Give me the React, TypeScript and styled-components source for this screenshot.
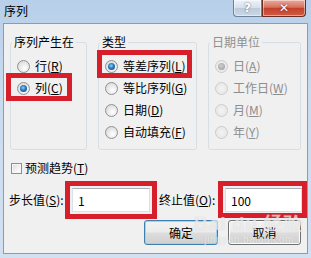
import styled, { createGlobalStyle } from 'styled-components';
import { ReactNode } from 'react';

const GlobalStyle = createGlobalStyle`
  html, body {
    margin: 0;
    padding: 0;
    background: #ffffff;
  }
  body {
    font-family: "Noto Sans CJK SC", "Microsoft YaHei", "DejaVu Sans", sans-serif;
    font-size: 12px;
    color: #000000;
  }
  * {
    box-sizing: border-box;
  }
`;

const Window = styled.div`
  position: relative;
  width: 311px;
  height: 258px;
  display: flex;
  flex-direction: column;
  padding: 0 3px 4px 3px;
  background: linear-gradient(180deg, #b7cfe9 0%, #c8dbef 35%, #d2e1f1 100%);
  overflow: hidden;
`;

const TitleBar = styled.div`
  height: 23px;
  display: flex;
  align-items: flex-start;
`;

const Title = styled.span`
  padding: 4px 0 0 1px;
  font-size: 12px;
  line-height: 14px;
  color: #000000;
`;

const Controls = styled.div`
  margin-left: auto;
  margin-right: 2px;
  display: flex;
`;

const CaptionButton = styled.div<{ $kind: 'help' | 'close' }>`
  height: 17px;
  width: ${(p) => (p.$kind === 'help' ? 29 : 44)}px;
  display: flex;
  align-items: center;
  justify-content: center;
  border: 1px solid ${(p) => (p.$kind === 'help' ? '#6f8198' : '#6b2c25')};
  border-top: none;
  border-radius: ${(p) => (p.$kind === 'help' ? '0 0 0 4px' : '0 0 4px 0')};
  background: ${(p) =>
    p.$kind === 'help'
      ? 'linear-gradient(180deg, #eef3f9 0%, #d6e0eb 48%, #bccbdc 52%, #cbd8e6 100%)'
      : 'linear-gradient(180deg, #e9ab9c 0%, #d8725f 45%, #c3402d 52%, #d35a42 100%)'};
  color: #ffffff;
  font-family: "DejaVu Sans", sans-serif;
  font-weight: bold;
  font-size: 12px;
  text-shadow: 0 0 2px ${(p) => (p.$kind === 'help' ? '#4a5a70' : '#5a1a12')};
  box-shadow: inset 0 0 0 1px rgba(255, 255, 255, 0.45);
`;

const Panel = styled.div`
  flex: 1;
  display: flex;
  flex-direction: column;
  background: #f0f0f0;
  border: 1px solid #8a9cb1;
  padding-top: 10px;
`;

const Groups = styled.div`
  display: flex;
  gap: 11px;
  padding-left: 6px;
`;

const Group = styled.fieldset<{ $width: number }>`
  margin: 0;
  padding: 5px 0 0 6px;
  width: ${(p) => p.$width}px;
  height: 116px;
  min-width: 0;
  border: 1px solid #d5dfe5;
  border-radius: 3px;
  display: flex;
  flex-direction: column;
  align-items: flex-start;
`;

const Legend = styled.legend<{ $disabled?: boolean }>`
  margin-left: -5px;
  padding: 0 2px;
  font-size: 12px;
  line-height: 16px;
  color: ${(p) => (p.$disabled ? '#8f8f8f' : '#000000')};
`;

const Mark = styled.span<{ $inset: string }>`
  position: relative;
  display: inline-flex;
  &::after {
    content: '';
    position: absolute;
    inset: ${(p) => p.$inset};
    border: 5px solid #d71f2b;
    pointer-events: none;
  }
`;

const Option = styled.label<{ $disabled?: boolean }>`
  height: 22px;
  display: inline-flex;
  align-items: center;
  gap: 5px;
  color: ${(p) => (p.$disabled ? '#8d8d8d' : '#000000')};
  white-space: nowrap;
  line-height: 14px;
`;

const Radio = styled.span<{ $checked?: boolean; $disabled?: boolean }>`
  width: 13px;
  height: 13px;
  flex: none;
  border-radius: 50%;
  border: 1px solid ${(p) => (p.$disabled ? '#c9cbcd' : '#8e9196')};
  background: ${(p) =>
    p.$disabled
      ? 'radial-gradient(circle at 50% 50%, #f4f4f4 0%, #e9e9e9 60%, #f6f6f6 100%)'
      : 'radial-gradient(circle at 60% 65%, #ffffff 0%, #e6e6e6 55%, #cfd1d3 100%)'};
  display: flex;
  align-items: center;
  justify-content: center;
  &::after {
    content: '';
    width: 7px;
    height: 7px;
    border-radius: 50%;
    display: ${(p) => (p.$checked ? 'block' : 'none')};
    background: ${(p) =>
      p.$disabled
        ? 'radial-gradient(circle at 45% 40%, #cfcfcf 0%, #a8a8a8 70%, #9a9a9a 100%)'
        : 'radial-gradient(circle at 45% 40%, #8fd0f7 0%, #2a78bd 45%, #103f72 100%)'};
  }
`;

const CheckRow = styled.label`
  height: 16px;
  margin: 10px 0 0 7px;
  display: flex;
  align-items: center;
  gap: 3px;
  line-height: 14px;
`;

const CheckBox = styled.span`
  width: 11px;
  height: 11px;
  flex: none;
  border: 1px solid #8f8f8f;
  background: linear-gradient(135deg, #dcdcdc 0%, #f4f4f4 60%, #ffffff 100%);
  box-shadow: inset 0 0 0 1px #f5f5f5;
`;

const FieldRow = styled.div`
  height: 24px;
  margin-top: 12px;
  display: flex;
  align-items: center;
  padding-left: 5px;
`;

const FieldLabel = styled.label<{ $width: number; $gap?: number }>`
  width: ${(p) => p.$width}px;
  margin-left: ${(p) => p.$gap ?? 0}px;
  white-space: nowrap;
  line-height: 14px;
`;

const TextBox = styled.input<{ $width: number }>`
  width: ${(p) => p.$width}px;
  height: 24px;
  margin: 0;
  padding: 0 5px;
  border: 1px solid #dbdfe6;
  border-top-color: #abadb3;
  background: #ffffff;
  font: inherit;
  font-size: 12px;
  color: #000000;
  outline: none;
`;

const ButtonRow = styled.div`
  margin-top: 8px;
  display: flex;
  justify-content: flex-end;
  gap: 10px;
  padding-right: 6px;
`;

const Button = styled.button<{ $width: number; $default?: boolean }>`
  width: ${(p) => p.$width}px;
  height: 25px;
  padding: 0;
  border: 1px solid ${(p) => (p.$default ? '#3c7fb1' : '#707070')};
  border-radius: 3px;
  background: linear-gradient(180deg, #f2f2f2 0%, #ebebeb 48%, #dddddd 52%, #cfcfcf 100%);
  box-shadow: inset 0 0 0 1px ${(p) => (p.$default ? '#9fd3f3' : '#fcfcfc')};
  font: inherit;
  font-size: 12px;
  color: #000000;
`;

/* faint site watermark lying over the buttons */
const Watermark = styled.div`
  position: absolute;
  left: 194px;
  top: 214px;
  display: flex;
  flex-direction: column;
  align-items: center;
  color: rgba(255, 255, 255, 0.6);
  text-shadow: 0 0 1px rgba(150, 150, 150, 0.4);
  pointer-events: none;
`;

const WatermarkBrand = styled.div`
  font-family: "Liberation Sans", Arial, sans-serif;
  font-weight: bold;
  font-size: 19px;
  line-height: 20px;
  letter-spacing: 1px;
`;

const WatermarkUrl = styled.div`
  font-family: "Liberation Sans", Arial, sans-serif;
  font-size: 10px;
  line-height: 11px;
  letter-spacing: 0.5px;
`;

function Choice({
  label,
  keyChar,
  checked,
  disabled,
}: {
  label: string;
  keyChar: string;
  checked?: boolean;
  disabled?: boolean;
}) {
  return (
    <Option $disabled={disabled}>
      <Radio $checked={checked} $disabled={disabled} />
      <span>
        {label}(<u>{keyChar}</u>)
      </span>
    </Option>
  );
}

function Marked({ inset, children }: { inset: string; children: ReactNode }) {
  return <Mark $inset={inset}>{children}</Mark>;
}

export default function App() {
  return (
    <>
      <GlobalStyle />
      <Window>
        <TitleBar>
          <Title>序列</Title>
          <Controls>
            <CaptionButton $kind="help">?</CaptionButton>
            <CaptionButton $kind="close">✕</CaptionButton>
          </Controls>
        </TitleBar>
        <Panel>
          <Groups>
            <Group $width={77}>
              <Legend>序列产生在</Legend>
              <Choice label="行" keyChar="R" />
              <Marked inset="-4px -9px -2px -11px">
                <Choice label="列" keyChar="C" checked />
              </Marked>
            </Group>
            <Group $width={99}>
              <Legend>类型</Legend>
              <Marked inset="-5px -6px -1px -8px">
                <Choice label="等差序列" keyChar="L" checked />
              </Marked>
              <Choice label="等比序列" keyChar="G" />
              <Choice label="日期" keyChar="D" />
              <Choice label="自动填充" keyChar="F" />
            </Group>
            <Group $width={93}>
              <Legend $disabled>日期单位</Legend>
              <Choice label="日" keyChar="A" checked disabled />
              <Choice label="工作日" keyChar="W" disabled />
              <Choice label="月" keyChar="M" disabled />
              <Choice label="年" keyChar="Y" disabled />
            </Group>
          </Groups>
          <CheckRow>
            <CheckBox />
            <span>
              预测趋势(<u>T</u>)
            </span>
          </CheckRow>
          <FieldRow>
            <FieldLabel $width={63}>
              步长值(<u>S</u>):
            </FieldLabel>
            <Marked inset="-7px">
              <TextBox $width={78} defaultValue="1" />
            </Marked>
            <FieldLabel $width={66} $gap={9}>
              终止值(<u>O</u>):
            </FieldLabel>
            <Marked inset="-7px -5px -6px -7px">
              <TextBox $width={77} defaultValue="100" />
            </Marked>
          </FieldRow>
          <ButtonRow>
            <Button $width={74} $default>
              确定
            </Button>
            <Button $width={73}>取消</Button>
          </ButtonRow>
        </Panel>
        <Watermark>
          <WatermarkBrand>Bai du 经验</WatermarkBrand>
          <WatermarkUrl>jingyan.baidu.com</WatermarkUrl>
        </Watermark>
      </Window>
    </>
  );
}
